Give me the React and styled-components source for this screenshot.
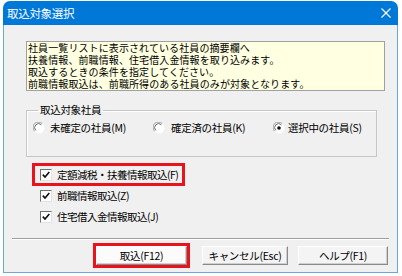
import React from "react";
import styled, { createGlobalStyle } from "styled-components";

const Global = createGlobalStyle`
  html, body { margin: 0; padding: 0; background: #ffffff; }
  body { font-family: "Noto Sans CJK JP", "Noto Sans", sans-serif; }
  * { box-sizing: border-box; }
`;

const FONT = `"Noto Sans CJK JP", "Noto Sans", sans-serif`;

const Window = styled.div`
  margin: 1px 0 0 3px;
  width: 395px;
  height: 272px;
  display: flex;
  flex-direction: column;
  border-radius: 7px 7px 0 0;
  overflow: hidden;
`;

const TitleBar = styled.div`
  height: 24px;
  flex: none;
  background: #0078d7;
  color: #ffffff;
  display: flex;
  align-items: center;
  justify-content: space-between;
  padding: 0 7px 0 4px;
  font-family: ${FONT};
  font-size: 11.5px;
  letter-spacing: -0.3px;
`;

const CloseIcon = () => (
  <svg width="10" height="10" viewBox="0 0 10 10">
    <path d="M0.5 0.5 L9.5 9.5 M9.5 0.5 L0.5 9.5" stroke="#fff" strokeWidth="1.1" />
  </svg>
);

const Body = styled.div`
  flex: 1;
  background: #f0f0f0;
  border: 1px solid #6aa7de;
  border-top: none;
  display: flex;
  flex-direction: column;
  padding-top: 16px;
  font-family: ${FONT};
  font-size: 10.5px;
  color: #000;
`;

const InfoBox = styled.div`
  margin-left: 22px;
  width: 359px;
  height: 50px;
  background: #ffffe1;
  border: 1px solid #a0a0a0;
  padding: 0 0 0 1px;
  font-size: 10px;
  line-height: 12px;
  letter-spacing: 0.1px;
  white-space: nowrap;
`;

const InfoLine = styled.div`
  height: 12px;
`;

const Group = styled.fieldset`
  margin: 12px 0 0 22px;
  width: 351px;
  padding: 4px 0 21px 6px;
  border: 1px solid #c6c6c6;
  box-shadow: inset 1px 1px 0 #ffffff;
  min-width: 0;
`;

const Legend = styled.legend`
  margin-left: 5px;
  padding: 0 2px;
  line-height: 14px;
  letter-spacing: -0.3px;
`;

const RadioRow = styled.div`
  display: grid;
  grid-template-columns: 120px 120px 120px;
  height: 14px;
`;

const RadioItem = styled.label`
  display: flex;
  align-items: center;
  gap: ${(p) => p.$gap}px;
  line-height: 14px;
  letter-spacing: -0.3px;
  white-space: nowrap;
`;

const RadioMark = ({ checked }) => (
  <svg width="12" height="12" viewBox="0 0 12 12">
    <circle cx="6" cy="6" r="5.5" fill="#fff" />
    <path d="M1.6 9.2 A5 5 0 0 1 9.2 1.6" stroke="#9a9a9a" strokeWidth="1" fill="none" />
    <path d="M2.8 8.4 A3.8 3.8 0 0 1 8.4 2.8" stroke="#6a6a6a" strokeWidth="1" fill="none" />
    {checked && <circle cx="6" cy="6" r="1.8" fill="#111" />}
  </svg>
);

const Checks = styled.div`
  display: flex;
  flex-direction: column;
  gap: 2px;
  margin-top: 8px;
  margin-left: 30px;
`;

const CheckRow = styled.label`
  display: flex;
  align-items: center;
  gap: 5px;
  width: 149px;
  height: 19px;
  padding-left: 6px;
  letter-spacing: -0.5px;
  white-space: nowrap;
  outline: ${(p) => (p.$highlight ? "3px solid #e8131b" : "none")};
  outline-offset: -1px;
`;

const CheckBox = styled.span`
  width: 12px;
  height: 12px;
  flex: none;
  background: #ffffff;
  border: 1px solid;
  border-color: #707070 #e2e2e2 #e2e2e2 #707070;
  display: flex;
  align-items: center;
  justify-content: center;
`;

const CheckMark = () => (
  <svg width="8" height="8" viewBox="0 0 8 8">
    <path d="M0.8 3.6 L3 6 L7.3 1" stroke="#111" strokeWidth="1.6" fill="none" />
  </svg>
);

const Separator = styled.div`
  margin: 12px 0 0 8px;
  width: 377px;
  height: 2px;
  border-top: 1px solid #a0a0a0;
  border-bottom: 1px solid #ffffff;
`;

const ButtonRow = styled.div`
  display: flex;
  gap: 10px;
  margin: 6px 0 0 92px;
`;

const Button = styled.button`
  width: ${(p) => p.$w}px;
  height: 19px;
  padding: 0;
  margin-right: ${(p) => (p.$highlight ? 5 : 0)}px;
  font-family: ${FONT};
  font-size: 10.5px;
  letter-spacing: -0.3px;
  color: #000;
  background: ${(p) => (p.$highlight ? "#fbfbfb" : "#f4f4f4")};
  border: 1px solid;
  border-color: #ffffff #8a8a8a #8a8a8a #ffffff;
  box-shadow: inset -1px -1px 0 #d0d0d0;
  outline: ${(p) => (p.$highlight ? "3px solid #e8131b" : "none")};
  outline-offset: 0px;
  line-height: 17px;
`;

const infoLines = [
  "社員一覧リストに表示されている社員の摘要欄へ",
  "扶養情報、前職情報、住宅借入金情報を取り込みます。",
  "取込するときの条件を指定してください。",
  "前職情報取込は、前職所得のある社員のみが対象となります。",
];

const radios = [
  { label: "未確定の社員(M)", checked: false, gap: 5 },
  { label: "確定済の社員(K)", checked: false, gap: 6 },
  { label: "選択中の社員(S)", checked: true, gap: 3 },
];

const checks = [
  { label: "定額減税・扶養情報取込(F)", highlight: true },
  { label: "前職情報取込(Z)", highlight: false },
  { label: "住宅借入金情報取込(J)", highlight: false },
];

const buttons = [
  { label: "取込(F12)", w: 91, highlight: true },
  { label: "キャンセル(Esc)", w: 86, highlight: false },
  { label: "ヘルプ(F1)", w: 90, highlight: false },
];

export default function App() {
  return (
    <>
      <Global />
      <Window>
        <TitleBar>
          <span>取込対象選択</span>
          <CloseIcon />
        </TitleBar>
        <Body>
          <InfoBox>
            {infoLines.map((l) => (
              <InfoLine key={l}>{l}</InfoLine>
            ))}
          </InfoBox>
          <Group>
            <Legend>取込対象社員</Legend>
            <RadioRow>
              {radios.map((r) => (
                <RadioItem key={r.label} $gap={r.gap}>
                  <RadioMark checked={r.checked} />
                  {r.label}
                </RadioItem>
              ))}
            </RadioRow>
          </Group>
          <Checks>
            {checks.map((c) => (
              <CheckRow key={c.label} $highlight={c.highlight}>
                <CheckBox>
                  <CheckMark />
                </CheckBox>
                {c.label}
              </CheckRow>
            ))}
          </Checks>
          <Separator />
          <ButtonRow>
            {buttons.map((b) => (
              <Button key={b.label} $w={b.w} $highlight={b.highlight}>
                {b.label}
              </Button>
            ))}
          </ButtonRow>
        </Body>
      </Window>
    </>
  );
}
